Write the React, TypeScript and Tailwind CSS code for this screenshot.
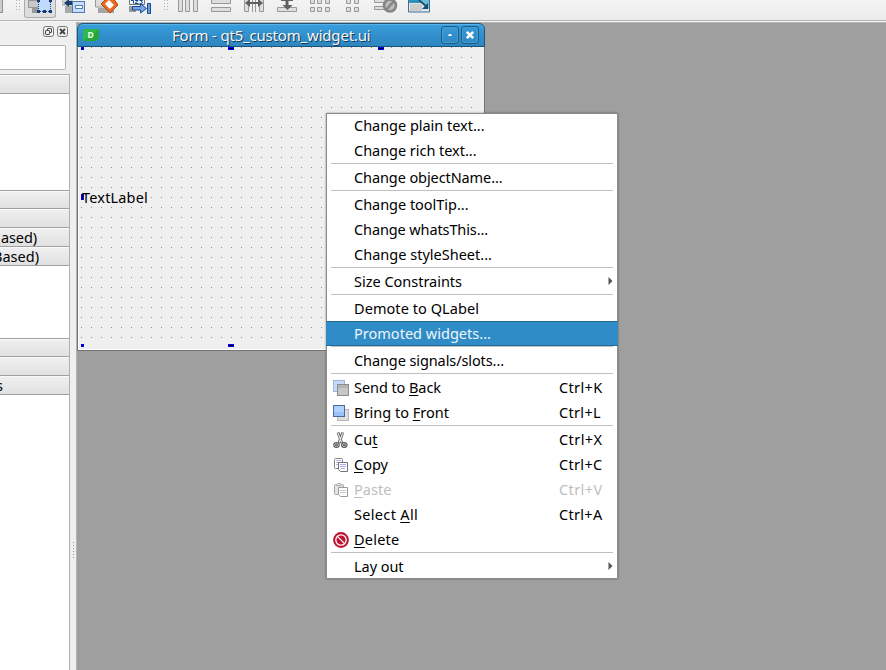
import { useLayoutEffect, useRef, type ReactNode } from "react";

/* Text tracked so that it fills the given width. */
function Fit({ w, children }: { w: number; children: ReactNode }) {
  const ref = useRef<HTMLSpanElement>(null);
  useLayoutEffect(() => {
    const el = ref.current;
    if (!el) return;
    el.style.letterSpacing = "0px";
    const n = (el.textContent || "").length;
    el.style.letterSpacing = `${(w - el.getBoundingClientRect().width) / n}px`;
  }, [w]);
  return (
    <span ref={ref} className="inline-block whitespace-pre">
      {children}
    </span>
  );
}

type Entry = {
  text?: string;
  key?: string;
  w?: number;
  shortcut?: string;
  sw?: number;
  icon?: ReactNode;
  sub?: boolean;
  active?: boolean;
  disabled?: boolean;
};

const backIcon = (
  <svg width="16" height="16" viewBox="0 0 16 16" shapeRendering="crispEdges">
    <rect x=".5" y=".5" width="11" height="11" fill="#c5dafb" stroke="#a5b5d4" />
    <rect x="4.5" y="4.5" width="11" height="11" fill="#c6c6c6" stroke="#8c8c8c" />
    <path d="M5 5h10v3H5z" fill="#b4b4b4" />
  </svg>
);
const frontIcon = (
  <svg width="16" height="16" viewBox="0 0 16 16" shapeRendering="crispEdges">
    <rect x="4.5" y="4.5" width="11" height="11" fill="#ddd" stroke="#b5b5b5" />
    <rect x=".5" y=".5" width="11" height="11" fill="#b3d1ff" stroke="#4d679a" />
    <path d="M1 7h10v4H1z" fill="#9cc1fa" />
  </svg>
);
const cutIcon = (
  <svg width="16" height="16" viewBox="0 0 16 16" fill="none">
    <path d="M5 .5 8.800 11M9.800 .5 6 11" stroke="#5c5c5c" strokeWidth="2.800" />
    <path d="M5 1 8.600 10.5M9.800 1 6.200 10.5" stroke="#e4e4e4" strokeWidth="1.200" />
    <g stroke="#555" strokeWidth="2.600">
      <ellipse cx="3.500" cy="13" rx="2" ry="1.600" />
      <ellipse cx="11.300" cy="13" rx="2" ry="1.600" />
    </g>
    <g stroke="#ccc" strokeWidth=".8">
      <ellipse cx="3.500" cy="13" rx="2" ry="1.600" />
      <ellipse cx="11.300" cy="13" rx="2" ry="1.600" />
    </g>
  </svg>
);
const copyIcon = (
  <svg width="16" height="16" viewBox="0 0 16 16" fill="#fff">
    <rect x="1.5" y="1.5" width="8" height="10" rx="1" stroke="#84848c" />
    <path d="M3 3.5h5M3 5.5h3M3 7.5h2" stroke="#b5b5ed" />
    <path d="M5.500 5.500h9v9h-7l-2-2z" stroke="#707078" />
    <path d="M7 7.500h6M7 9.500h6M8 11.500h4" stroke="#b0b0e8" />
  </svg>
);
const pasteIcon = (
  <svg width="16" height="16" viewBox="0 0 16 16" fill="#fff">
    <rect x="1.500" y="2.500" width="9" height="10" rx="1" fill="#e4e4e4" stroke="#a5a5a5" />
    <path d="M3.500 3.500v-1l1-1h3l1 1v1z" fill="#eee" stroke="#aaa" />
    <path d="M5.500 5.500h9v9h-7l-2-2z" stroke="#999" />
    <path d="M7 8.500h6M7 10.500h6" stroke="#ccc" />
  </svg>
);
const deleteIcon = (
  <svg width="16" height="16" viewBox="0 0 16 16">
    <circle cx="8" cy="8" r="7.900" fill="#bf1230" />
    <circle cx="8" cy="8" r="5.200" fill="none" stroke="#fff" strokeWidth="1.300" />
    <path d="m4.400 4.400 7.200 7.200" stroke="#fff" strokeWidth="1.300" />
  </svg>
);

const groups: Entry[][] = [
  [
    { text: "Change plain text...", w: 130.5 },
    { text: "Change rich text...", w: 122.5 },
  ],
  [{ text: "Change objectName...", w: 148.5 }],
  [
    { text: "Change toolTip...", w: 114.5 },
    { text: "Change whatsThis...", w: 134 },
    { text: "Change styleSheet...", w: 138 },
  ],
  [{ text: "Size Constraints", w: 108, sub: true }],
  [
    { text: "Demote to QLabel", w: 125 },
    { text: "Promoted widgets...", w: 137, active: true },
  ],
  [{ text: "Change signals/slots...", w: 150 }],
  [
    { text: "Send to Back", key: "B", w: 87, shortcut: "Ctrl+K", sw: 43.5, icon: backIcon },
    { text: "Bring to Front", key: "F", w: 95, shortcut: "Ctrl+L", sw: 42, icon: frontIcon },
  ],
  [
    { text: "Cut", key: "t", w: 23.5, shortcut: "Ctrl+X", sw: 43.5, icon: cutIcon },
    { text: "Copy", key: "C", w: 34, shortcut: "Ctrl+C", sw: 43.5, icon: copyIcon },
    { text: "Paste", key: "P", w: 37.5, shortcut: "Ctrl+V", sw: 43.5, icon: pasteIcon, disabled: true },
    { text: "Select All", key: "A", w: 64, shortcut: "Ctrl+A", sw: 43.5 },
    { text: "Delete", key: "D", w: 45.5, icon: deleteIcon },
  ],
  [{ text: "Lay out", w: 49.5, sub: true }],
];

function Label({ text, k }: { text: string; k?: string }) {
  if (!k) return <>{text}</>;
  const i = text.indexOf(k);
  return (
    <>
      {text.slice(0, i)}
      <span className="underline decoration-1 underline-offset-2 [text-decoration-skip-ink:none]">{k}</span>
      {text.slice(i + 1)}
    </>
  );
}

function Item({ e }: { e: Entry }) {
  const tone = e.active
    ? "bg-[#308cc6] text-[#eff5fa] border-y border-[#246b99]"
    : e.disabled
      ? "text-[#bebebe]"
      : "text-black";
  return (
    <div className={`flex h-[25px] items-center pl-[7px] pr-[5px] ${tone}`}>
      <div className="w-[21px] shrink-0">{e.icon}</div>
      <div className="w-[205px] shrink-0 leading-[17px]">
        <Fit w={e.w!}>
          <Label text={e.text!} k={e.key} />
        </Fit>
      </div>
      {e.shortcut && (
        <div className="leading-[17px]">
          <Fit w={e.sw!}>{e.shortcut}</Fit>
        </div>
      )}
      {e.sub && (
        <svg className="mb-[1px] ml-auto" width="5" height="8" viewBox="0 0 5 8">
          <path d="M.5 0 4.500 4 .5 8z" fill="#555" />
        </svg>
      )}
    </div>
  );
}

function ContextMenu() {
  return (
    <div className="absolute left-[326px] top-[113px] h-[466px] w-[292px] bg-white shadow-[inset_0_0_0_1px_#8a8a8a,0_0_2px_rgba(0,0,0,0.4)]">
      {groups.map((g, i) => (
        <div key={i}>
          {i > 0 && <div className="ml-[5px] mr-[5px] h-[2px] border-t border-[#bfbfbf]" />}
          {g.map((e) => (
            <Item key={e.text} e={e} />
          ))}
        </div>
      ))}
    </div>
  );
}

function Handle({ at }: { at: string }) {
  return <div className={`absolute border border-[#0000f0] bg-black ${at}`} />;
}

function FormWindow() {
  return (
    <div className="absolute left-[77px] top-[23px] flex h-[328px] w-[408px] flex-col">
      <div className="flex h-[24px] shrink-0 items-center rounded-t-[6px] border border-[#1c557b] bg-linear-to-b from-[#3a9fdd] from-0% via-[#3290cd] via-50% to-[#2e86be] pl-[5px] pr-[5px] shadow-[inset_0_1px_0_#55b1e6]">
        <svg className="shrink-0" width="16" height="12" viewBox="0 0 16 12">
          <path d="M2 0h14v9l-3 3H0V2z" fill="#30b944" />
          <path d="M16 0v9l-3 3H0z" fill="#26a63a" />
          <text x="4.500" y="9" fontFamily="Noto Sans, sans-serif" fontSize="8.500" fontWeight="bold" fill="#e9ffe9">D</text>
        </svg>
        <div className="ml-[73px] text-[15px] leading-[20px] text-[#f7f7f7] [text-shadow:1px_1px_0_#17384f]">
          <Fit w={198.5}>Form - qt5_custom_widget.ui</Fit>
        </div>
        <div className="ml-auto flex gap-[2px]">
          {[0, 1].map((i) => (
            <div key={i} className="flex h-[18px] w-[18px] items-center justify-center rounded-[3px] border border-[#1e5c85] shadow-[inset_0_0_0_1px_#429fd4]">
              <svg width="10" height="10" viewBox="0 0 10 10">
                {i === 0 ? (
                  <path d="M3 6 4 4h2l1 2z" fill="#fff" />
                ) : (
                  <path d="m1.800 1.800 6.400 6.400m0-6.400L1.800 8.200" stroke="#fff" strokeWidth="2.600" />
                )}
              </svg>
            </div>
          ))}
        </div>
      </div>
      <div className="relative grow border-x border-b border-[#747474] bg-[#efefef] shadow-[inset_1px_-1px_0_#fff]">
        <svg className="ml-[3px] block" width="391" height="291">
          <pattern id="dots" width="10" height="10" patternUnits="userSpaceOnUse">
            <rect width="1" height="1" fill="#909090" />
          </pattern>
          <rect width="391" height="291" fill="url(#dots)" />
        </svg>
        <Handle at="left-[3px] top-0 h-[3px] w-[3px]" />
        <Handle at="left-[150px] top-0 h-[3px] w-[6px]" />
        <Handle at="left-[300px] top-0 h-[3px] w-[6px]" />
        <Handle at="left-[3px] top-[147px] h-[6px] w-[3px]" />
        <Handle at="left-[3px] top-[297px] h-[3px] w-[3px]" />
        <Handle at="left-[150px] top-[297px] h-[3px] w-[6px]" />
        <div className="absolute left-[4px] top-[141px] leading-[18px] text-black">
          <Fit w={66}>TextLabel</Fit>
        </div>
      </div>
    </div>
  );
}

function Grip() {
  return (
    <svg width="5" height="12" viewBox="0 0 5 12" className="shrink-0">
      {[0, 3, 6, 9].map((y) => (
        <path key={y} d={`M0 ${y}h1v1H0zM3 ${y}h1v1H3z`} fill="#b4b4b4" />
      ))}
    </svg>
  );
}

const bar = { fill: "#dedede", stroke: "#989898" };

function Toolbar() {
  return (
    <div className="flex h-[22px] shrink-0 items-start overflow-hidden border-b border-[#f6f6f6] bg-linear-to-b from-[#f3f3f3] to-[#ebebeb] shadow-[inset_0_-1px_0_#b4b4b4]">
      <div className="h-[13px] w-[3px] shrink-0 border-b border-r border-[#909090] bg-[#ccc]" />
      <div className="ml-[13px]"><Grip /></div>
      <div className="ml-[3px] h-[18px] w-[32px] shrink-0 rounded-b-[3px] border border-t-0 border-[#acacac] bg-[#dedede]">
        <svg width="30" height="16" viewBox="25 0 30 16" shapeRendering="crispEdges">
          <path d="M28 0h10v7H28z" fill="#c8c8c8" stroke="#999" />
          <path d="M32 8h6v5h-6z" fill="#999" />
          <rect x="38" y="-3" width="13" height="15" fill="#bed9fc" />
          <path d="M38.500 0v12M50.500 0v12M38 11.500h13" fill="none" stroke="#1c3f7c" strokeDasharray="1 1" />
          <path d="M37 0h3v2h-3zM49 0h3v2h-3zM37 10h3v3h-3zM43 10h3v3h-3zM49 10h3v3h-3z" fill="#173b78" />
        </svg>
      </div>
      <svg className="ml-[6px] shrink-0" width="24" height="14" viewBox="62 0 24 14">
        <path d="M62-1h10v6H62z" fill="#d2d2d2" stroke="#aaa" />
        <path d="M65 6h7v7h-7z" fill="#aaa" />
        <path d="M64 3 69-1v2h8v4h-8v2z" fill="#17406e" />
        <rect x="72.500" y="1.500" width="12" height="11" fill="#c6defc" stroke="#5478b0" />
        <path d="M75.500 5.500h7v3h-7z" fill="#f2f8ff" stroke="#547bb2" />
      </svg>
      <svg className="ml-[8px] shrink-0" width="24" height="14" viewBox="94 0 24 14">
        <path d="M95.500-1h12v8h-12z" fill="#ddd" stroke="#999" />
        <path d="M98 8h16v5H98z" fill="#a4a4a4" />
        <path d="m101 4 6-6h6l5 7-8 8z" fill="#e96a21" stroke="#a84a14" />
        <path d="m105 4 4-4 5 5-4 4z" fill="#fff" />
      </svg>
      <svg className="ml-[9px] shrink-0" width="25" height="15" viewBox="127 0 25 15">
        <path d="M129.500-2h15v6.500h-15z" fill="#eff5fd" stroke="#777" />
        <path d="M131 .5h2.500v3M135 .5h3l-3 3h3.500M139.500.5h3l-1.500 1 1.500 1-1 1.200h-2" fill="none" stroke="#12458c" />
        <path d="M129 6h7v6h-7z" fill="#999" />
        <path d="M132.500 6.500h8v-3l6 5-6 4.500v-3h-8z" fill="#75a5e5" stroke="#194b91" />
        <path d="M147.500 3.500h3v10h-3z" fill="#6b9ce0" stroke="#194b91" />
      </svg>
      <div className="ml-[12px]"><Grip /></div>
      <svg className="ml-[9px] shrink-0" width="22" height="13" viewBox="0 0 22 13" {...bar}>
        <path d="M.5-2h4v13.500h-4zM7.500-2h4v13.500h-4zM15.500-2h4v13.500h-4z" />
      </svg>
      <svg className="ml-[11px] shrink-0" width="21" height="13" viewBox="0 0 21 13" {...bar}>
        <path d="M.5-2h19v5.500H.5zM.5 7.500h19v4H.5z" />
      </svg>
      <svg className="ml-[12px] shrink-0" width="22" height="13" viewBox="0 0 22 13" {...bar}>
        <path d="M.5-2h4v13.500h-4zM15.500-2h4v13.500h-4z" />
        <path d="M8.500 0v12M11.500 0v12" />
        <path d="M1 3 6-1v3h8v-3l5 4-5 4V4H6v3z" fill="#606060" stroke="none" />
      </svg>
      <svg className="ml-[11px] shrink-0" width="22" height="13" viewBox="0 0 22 13" {...bar}>
        <path d="M.5 7.500h19v4H.5z" />
        <path d="M8.500 0h3v5h4l-5 5-5-5h3zM4 0h12v1H4z" fill="#606060" stroke="none" />
      </svg>
      <svg className="ml-[11px] shrink-0" width="21" height="13" viewBox="0 0 21 13" {...bar}>
        <path d="M.5-2h4v5.500h-4zM7.500-2h4v5.500h-4zM15.500-2h4v5.500h-4zM.5 7.500h4v4h-4zM7.500 7.500h4v4h-4zM15.500 7.500h4v4h-4z" />
      </svg>
      <svg className="ml-[15px] shrink-0" width="15" height="13" viewBox="0 0 15 13" {...bar}>
        <path d="M.5-2h4v5.500h-4zM8.500-2h4v5.500h-4zM.5 7.500h4v4h-4zM8.500 7.500h4v4h-4z" />
      </svg>
      <svg className="ml-[13px] shrink-0" width="25" height="14" viewBox="0 0 25 14" {...bar}>
        <path d="M.5-2h11v4.500H.5zM.5 6.500h10v3H.5z" />
        <circle cx="16" cy="5.500" r="6" fill="#bbb" stroke="#858585" strokeWidth="2.600" />
        <path d="m12 10 8-9" stroke="#858585" strokeWidth="2.600" />
      </svg>
      <svg className="ml-[9px] shrink-0" width="23" height="13" viewBox="0 0 23 13">
        <path d="M.5-2h21v14H.5z" fill="#e5e5e5" stroke="#407099" />
        <path d="M1 0h12v3H1z" fill="#2f91b8" />
        <path d="M12 0h9v9z" fill="#71bdd5" />
        <path d="M2 4h12v7H2z" fill="#ccc" />
        <path d="m11 0 8 7" stroke="#15547b" strokeWidth="1.800" />
        <path d="M20 3v6h-6z" fill="#124e76" />
      </svg>
    </div>
  );
}

function Header({ h, right, children }: { h: string; right?: string; children?: ReactNode }) {
  return (
    <div className={`flex shrink-0 justify-start border-b border-[#a0a0a0] bg-linear-to-b from-[#f0f0f0] to-[#e1e1e1] shadow-[inset_0_1px_0_#fafafa] ${h}`}>
      {children && <div className={`flex shrink-0 items-center justify-end text-black ${right}`}>{children}</div>}
    </div>
  );
}

function Dock() {
  return (
    <div className="flex w-[70px] shrink-0 flex-col">
      <div className="flex h-[23px] shrink-0 items-center justify-end gap-[3px] pb-[5px] pr-[2px]">
        <svg width="11" height="11" viewBox="0 0 11 11" fill="none" stroke="#4c4c4c">
          <rect x=".5" y=".5" width="10" height="10" rx="2" stroke="#777" />
          <rect x="4.500" y="2.500" width="4" height="4" rx=".5" />
          <rect x="2.500" y="4.500" width="4" height="4" rx=".5" fill="#efefef" />
        </svg>
        <svg width="11" height="11" viewBox="0 0 11 11" fill="none" stroke="#444">
          <rect x=".5" y=".5" width="10" height="10" rx="2" stroke="#777" />
          <path d="m3 3 5 5m0-5L3 8" strokeWidth="1.800" />
        </svg>
      </div>
      <div className="mr-[4px] h-[25px] shrink-0 rounded-r-[2px] border border-l-0 border-[#b3b3b3] bg-white" />
      <div className="mt-[4px] flex grow flex-col border-r border-t border-[#b0b0b0] bg-white">
        <Header h="h-[19px]" />
        <div className="h-[97px] shrink-0 border-b border-[#a0a0a0]" />
        <Header h="h-[18px]" />
        <Header h="h-[19px]" />
        <Header h="h-[19px]" right="w-[37px]"><Fit w={36}>ased)</Fit></Header>
        <Header h="h-[19px]" right="w-[39px]"><Fit w={46}>Based)</Fit></Header>
        <div className="h-[73px] shrink-0 border-b border-[#a0a0a0]" />
        <Header h="h-[18px]" />
        <Header h="h-[19px]" />
        <Header h="h-[19px]" right="w-[3px]"><Fit w={7}>s</Fit></Header>
      </div>
    </div>
  );
}

export default function App() {
  return (
    <div className="relative flex h-[670px] w-[886px] flex-col overflow-hidden bg-[#efefef] font-['Noto_Sans',sans-serif] text-[14.5px] leading-[18px]">
      <Toolbar />
      <div className="flex min-h-0 grow overflow-hidden">
        <Dock />
        <div className="flex w-[6px] shrink-0 flex-col items-center pt-[520px]">
          <svg width="2" height="18" viewBox="0 0 2 18">
            {[0, 3, 6, 9, 12, 15].map((y) => (
              <rect key={y} x="1" y={y} width="1" height="1" fill="#999" />
            ))}
          </svg>
        </div>
        <div className="grow border-l border-t border-[#b4b4b4] bg-[#9f9f9f]" />
      </div>
      <FormWindow />
      <ContextMenu />
    </div>
  );
}
